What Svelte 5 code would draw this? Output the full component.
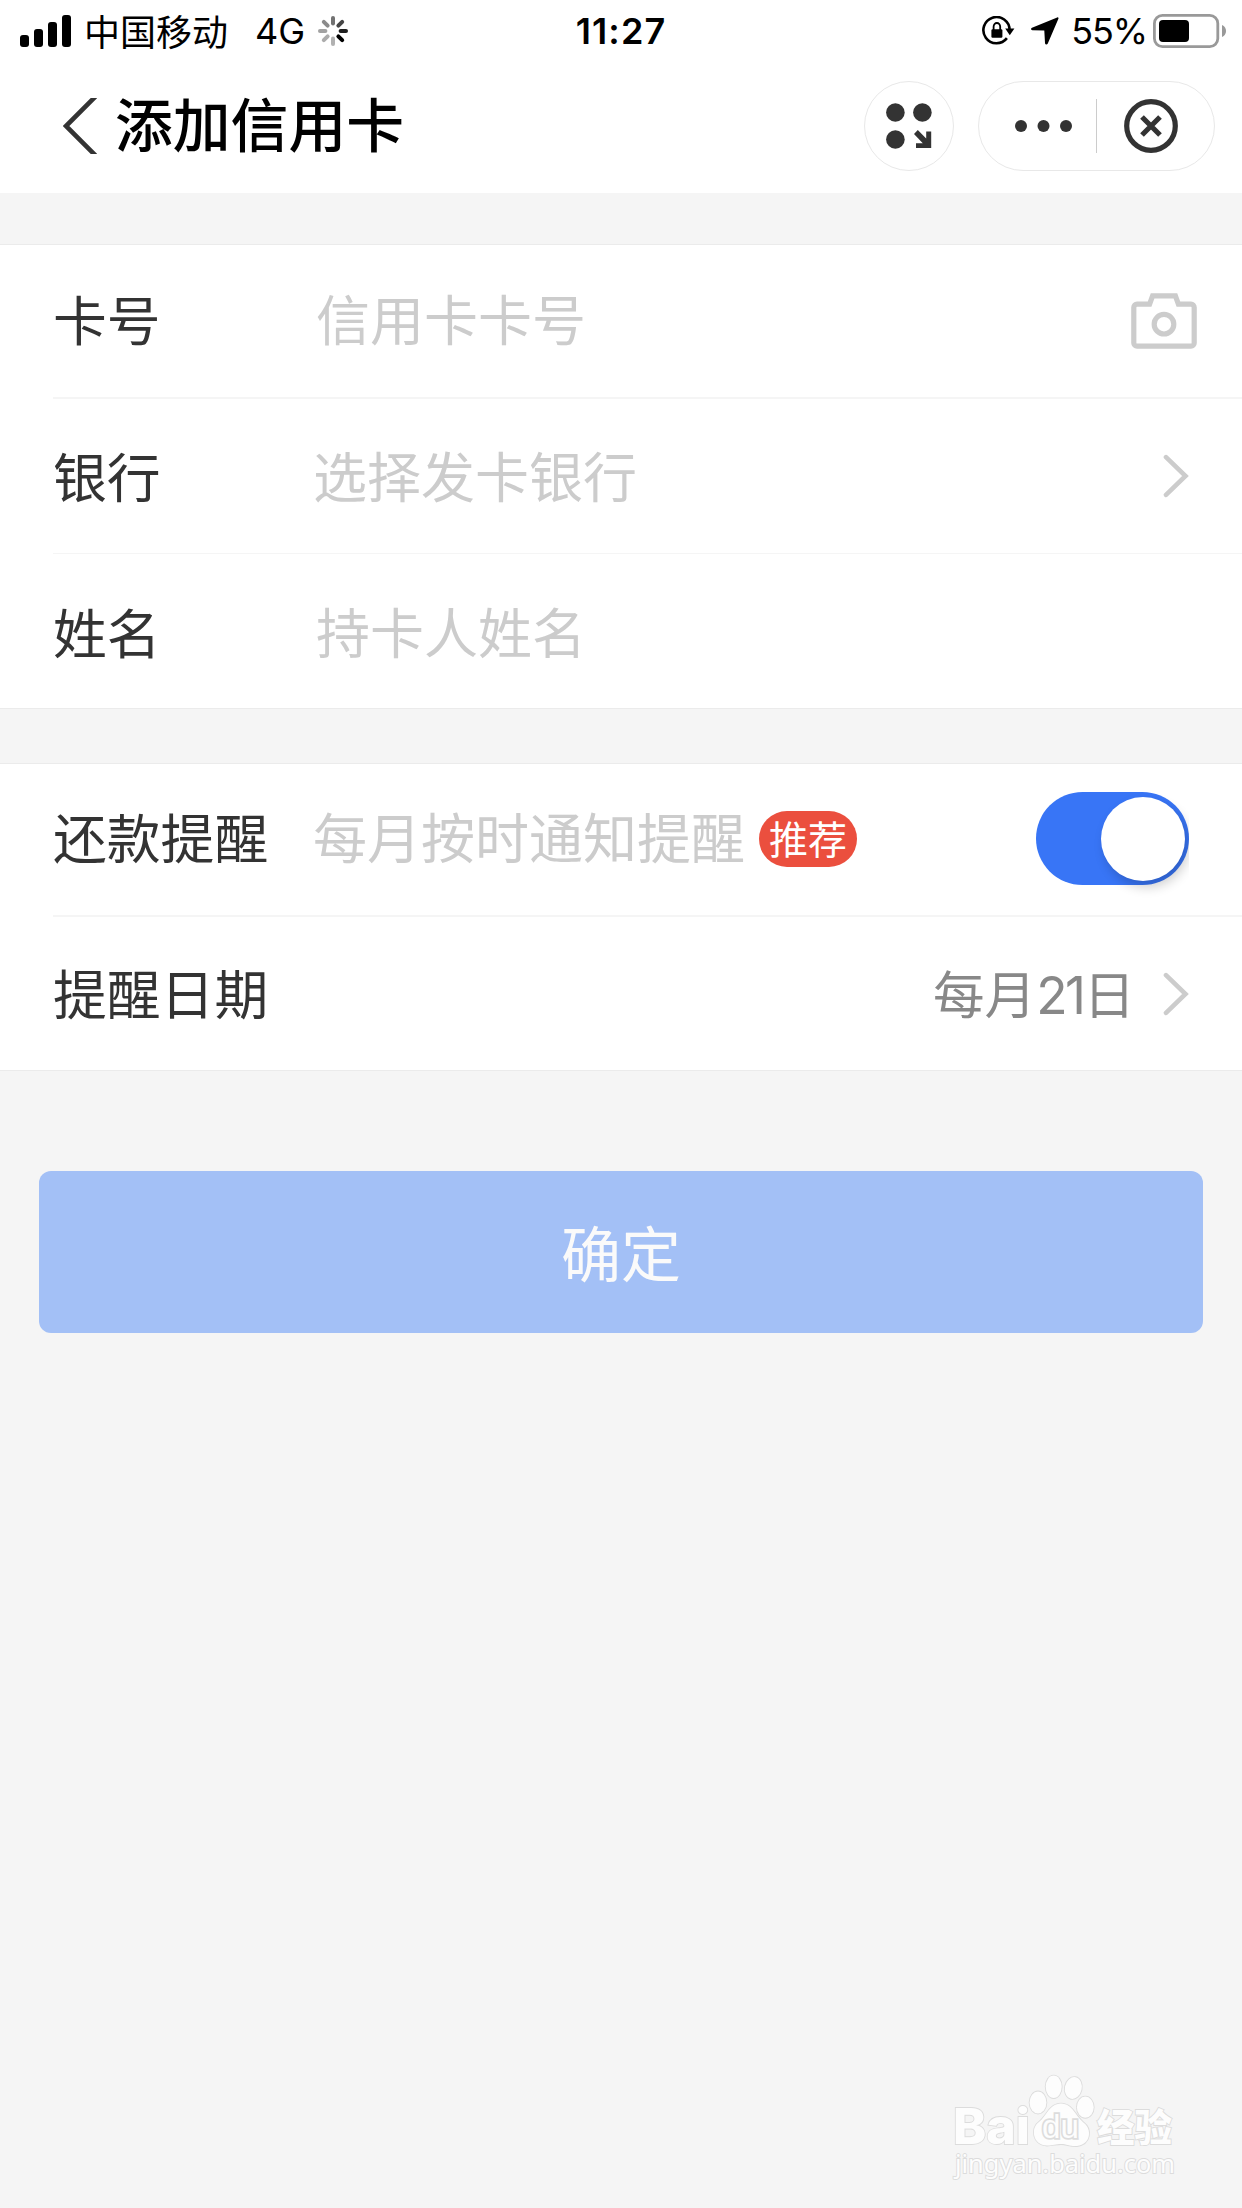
<script lang="ts">
	let reminderOn = $state(true);

	const bars = [12, 18, 25, 32];
	const spokes = [0.55, 0.72, 0.88, 1, 0.3, 0.32, 0.36, 0.45];
</script>

{#snippet chevron()}
	<svg class="chevron" width="26" height="44" viewBox="0 0 26 44">
		<path d="M3 3.2L22.5 22L3 40.8" />
	</svg>
{/snippet}

<div class="page">
	<div class="status">
		<div class="status-left">
			<div class="signal">
				{#each bars as height}
					<i style="height: {height}px"></i>
				{/each}
			</div>
			<span class="carrier">中国移动</span>
			<span class="network">4G</span>
			<svg class="spinner" width="30" height="30" viewBox="-15 -15 30 30">
				{#each spokes as opacity, i}
					<path d="M0 -7.6V-13" {opacity} transform="rotate({i * 45})" />
				{/each}
			</svg>
		</div>
		<span class="time">11:27</span>
		<div class="status-right">
			<svg class="lock" width="33" height="30" viewBox="0 0 33 30">
				<path class="ring" d="M24.9 22.1A13.1 13.1 0 1 1 27.6 14" />
				<path d="M23.2 12.6h9.2l-4.6 6.6z" />
				<rect x="9.4" y="13.2" width="11" height="8.6" rx="1.2" />
				<path class="shackle" d="M11.6 14v-3.2a3.3 3.8 0 0 1 6.6 0V14" />
			</svg>
			<svg class="location" width="28" height="28" viewBox="0 0 28 28">
				<path d="M26.2 0.4L1 10.7C-0.4 11.4 -0.2 13.3 1.4 13.3L13.3 13.6L14 26C14.2 27.8 16 28 16.8 26.4L27.4 1.8C27.8 0.7 27.1 0.1 26.2 0.4Z" />
			</svg>
			<span class="percent">55%</span>
			<svg class="battery" width="74" height="34" viewBox="0 0 74 34">
				<rect class="shell" x="1.4" y="1.4" width="63.4" height="31.2" rx="8" />
				<rect x="6" y="6" width="30" height="22" rx="4" />
				<path class="cap" d="M69 11c5.4 2 5.4 10 0 12z" />
			</svg>
		</div>
	</div>

	<header class="nav">
		<button class="back" aria-label="返回">
			<svg width="34" height="56" viewBox="0 0 34 56">
				<path d="M34 -3L3 28L34 59" />
			</svg>
		</button>
		<h1>添加信用卡</h1>
		<button class="apps" aria-label="小程序">
			<svg width="46" height="46" viewBox="0 0 46 46">
				<circle cx="9.4" cy="9.5" r="9.3" />
				<circle cx="36.4" cy="9.5" r="9.3" />
				<circle cx="9.4" cy="36.5" r="9.3" />
				<path d="M31.8 27L40.2 35.4V28.6H45.2V45H30V40.2H36.8L28 31Z" />
			</svg>
		</button>
		<div class="capsule">
			<button class="more" aria-label="更多">
				<svg width="58" height="12" viewBox="0 0 58 12">
					<circle cx="6" cy="6" r="6" />
					<circle cx="28.5" cy="6" r="6" />
					<circle cx="51" cy="6" r="6" />
				</svg>
			</button>
			<button class="close" aria-label="关闭">
				<svg width="54" height="54" viewBox="0 0 54 54">
					<circle cx="27" cy="27" r="24.3" />
					<path d="M18 18L36 36M36 18L18 36" />
				</svg>
			</button>
		</div>
	</header>

	<section class="group card-info">
		<div class="row">
			<span class="label">卡号</span>
			<span class="placeholder indent">信用卡卡号</span>
			<svg class="camera" width="66" height="56" viewBox="0 0 66 56">
				<path d="M6 11.2H18.6L21.6 2.8H44.4L47.4 11.2H60A3.2 3.2 0 0 1 63.2 14.4V50A3.2 3.2 0 0 1 60 53.2H6A3.2 3.2 0 0 1 2.8 50V14.4A3.2 3.2 0 0 1 6 11.2Z" />
				<circle cx="33" cy="31.2" r="9.8" />
			</svg>
		</div>
		<div class="row">
			<span class="label">银行</span>
			<span class="placeholder">选择发卡银行</span>
			{@render chevron()}
		</div>
		<div class="row">
			<span class="label">姓名</span>
			<span class="placeholder indent">持卡人姓名</span>
		</div>
	</section>

	<section class="group reminder">
		<div class="row">
			<span class="label">还款提醒</span>
			<span class="placeholder">每月按时通知提醒</span>
			<span class="badge">推荐</span>
			<button
				class="switch"
				class:switch-on={reminderOn}
				role="switch"
				aria-checked={reminderOn}
				aria-label="还款提醒"
				onclick={() => reminderOn = !reminderOn}
			>
				<span class="knob"></span>
			</button>
		</div>
		<div class="row">
			<span class="label">提醒日期</span>
			<span class="value">每月<span class="digits">21</span>日</span>
			{@render chevron()}
		</div>
	</section>

	<button class="submit">确定</button>

	<svg class="watermark" width="230" height="112" viewBox="0 0 230 112">
		<g class="mark">
			<text class="bai" x="5" y="69" textLength="77" lengthAdjust="spacingAndGlyphs">Bai</text>
			<ellipse cx="90" cy="27.5" rx="8.4" ry="11" />
			<ellipse cx="105.7" cy="11.8" rx="8" ry="11.2" />
			<ellipse cx="125.3" cy="13" rx="8.4" ry="11" transform="rotate(12 125.3 13)" />
			<ellipse cx="137.3" cy="32.2" rx="8.4" ry="10.6" />
			<path d="M113 28.6C101 29 99 41 91 47C82 53 85 70.5 99 70.5C105 70.5 108 69 113 69C119 69 122 71.5 129 71C143 69.5 144 54 136 48C127 41 125 29 113 28.6Z" />
			<text class="du" x="94" y="63" textLength="37" lengthAdjust="spacingAndGlyphs">du</text>
			<text class="exp" x="149" y="66" textLength="75" lengthAdjust="spacingAndGlyphs">经验</text>
			<text class="site" x="7" y="98" textLength="220" lengthAdjust="spacingAndGlyphs">jingyan.baidu.com</text>
		</g>
	</svg>
</div>

<style>
	:global(body) {
		background: #f5f5f5;
	}

	.page {
		display: flex;
		flex-direction: column;
		width: 1242px;
		height: 2208px;
		overflow: hidden;
		background: #f5f5f5;
		font-family: "Noto Sans CJK SC", sans-serif;
		color: #333;
	}

	button {
		margin: 0;
		padding: 0;
		border: 0;
		background: none;
		font: inherit;
		color: inherit;
	}

	svg {
		display: block;
		flex-shrink: 0;
	}

	.status {
		display: grid;
		grid-template-columns: 1fr auto 1fr;
		align-items: center;
		height: 62px;
		padding: 0 15px 0 20px;
		background: #fff;
		color: #000;
		font-size: 36px;
		line-height: 62px;
	}

	.status-left,
	.status-right {
		display: flex;
		align-items: center;
	}

	.status-right {
		justify-content: flex-end;
	}

	.signal {
		display: flex;
		align-items: flex-end;
		gap: 5px;
		height: 32px;
		margin-right: 13px;
	}

	.signal i {
		width: 9px;
		border-radius: 3px;
		background: #000;
	}

	.carrier {
		line-height: 60px;
		padding-bottom: 2px;
	}

	.network,
	.time,
	.percent {
		font-family: Inter, sans-serif;
	}

	.network {
		margin-left: 27px;
	}

	.time {
		margin-right: 5px;
		font-weight: 600;
		letter-spacing: 1.1px;
	}

	.percent {
		letter-spacing: -1.1px;
	}

	.spinner {
		margin-left: 13px;
		stroke: #000;
		stroke-width: 4;
		stroke-linecap: round;
	}

	.ring,
	.shackle {
		fill: none;
		stroke: #000;
		stroke-width: 2.6;
	}

	.shackle {
		stroke-width: 1.8;
	}

	.location {
		margin: 0 12px 0 16px;
	}

	.battery {
		margin-left: 6px;
	}

	.shell {
		fill: none;
		stroke: #999;
		stroke-width: 2.8;
	}

	.cap {
		fill: #999;
	}

	.nav {
		display: flex;
		align-items: center;
		height: 128px;
		padding: 0 27px 3px 63px;
		background: #fff;
	}

	.back path {
		fill: none;
		stroke: #333;
		stroke-width: 4.6;
	}

	h1 {
		flex: 1;
		margin: 0 0 0 18px;
		padding-bottom: 8px;
		font-size: 57.8px;
		font-weight: 500;
		line-height: 80px;
		color: #000;
	}

	.apps,
	.capsule {
		display: flex;
		align-items: center;
		box-sizing: border-box;
		height: 90px;
		border: 1px solid #e8e8e8;
		border-radius: 45px;
		fill: #333;
	}

	.apps {
		justify-content: center;
		width: 90px;
		margin-right: 24px;
	}

	.capsule {
		width: 237px;
	}

	.more {
		display: flex;
		justify-content: flex-end;
		align-items: center;
		width: 118px;
		height: 54px;
		padding-right: 23px;
		box-sizing: border-box;
		border-right: 1px solid #ccc;
	}

	.close {
		margin-left: 27px;
	}

	.close svg {
		fill: none;
		stroke: #333;
		stroke-width: 5.2;
	}

	.group {
		padding-left: 53px;
		border-top: 1px solid #ebebeb;
		border-bottom: 1px solid #ebebeb;
		background: #fff;
	}

	.card-info {
		margin-top: 51px;
	}

	.reminder {
		margin-top: 54px;
	}

	.row {
		display: flex;
		align-items: center;
		height: 152px;
		padding-right: 53px;
		font-size: 54px;
		line-height: 80px;
	}

	.row + .row {
		height: 154px;
		border-top: 2px solid #f5f5f5;
	}

	.card-info .row:last-child {
		border-top-width: 1px;
	}

	.reminder .row {
		height: 149px;
		padding-bottom: 2px;
	}

	.reminder .row + .row {
		height: 153px;
		padding-bottom: 0;
	}

	.label,
	.placeholder {
		padding-bottom: 6px;
	}

	.row + .row .label,
	.row + .row .placeholder {
		padding-bottom: 3px;
	}

	.card-info .row:last-child .label,
	.card-info .row:last-child .placeholder {
		padding-bottom: 1px;
	}

	.label {
		width: 260px;
		font-size: 53.8px;
	}

	.placeholder {
		color: #ccc;
	}

	.indent {
		margin-left: 3px;
	}

	.chevron,
	.camera {
		margin-left: auto;
		fill: none;
		stroke: #ccc;
		stroke-width: 5.2;
	}

	.chevron {
		stroke-width: 4.6;
		stroke-linecap: round;
	}

	.camera {
		margin-right: -8px;
	}

	.badge {
		height: 56px;
		margin-left: 14px;
		padding: 0 10px;
		border-radius: 28px;
		background: #eb4f3e;
		color: #fff;
		font-size: 39px;
		line-height: 52px;
	}

	.switch {
		display: flex;
		align-items: center;
		width: 153px;
		height: 93px;
		margin-left: auto;
		padding: 0 4px;
		box-sizing: border-box;
		border-radius: 47px;
		background: #ddd;
		/* knob shadow is cut off at the right edge of the track */
		clip-path: inset(0 0 -30px 0);
	}

	.switch-on {
		justify-content: flex-end;
		background: #3875f6;
	}

	.knob {
		width: 84px;
		height: 84px;
		border-radius: 50%;
		background: #fff;
		box-shadow: 4px 6px 12px rgba(0, 0, 0, 0.2);
	}

	.value {
		margin-left: auto;
		font-size: 51.5px;
		color: #888;
	}

	.value + .chevron {
		margin-left: 28px;
	}

	.digits {
		font-family: Inter, sans-serif;
		font-weight: 400;
		letter-spacing: -2.5px;
	}

	.submit {
		height: 162px;
		margin: 100px 39px 0;
		padding-bottom: 2px;
		border-radius: 12px;
		background: #a3c0f6;
		color: #fafafa;
		font-size: 60px;
		line-height: 150px;
	}

	.watermark {
		margin: auto 64px 21px auto;
		overflow: visible;
	}

	.mark {
		fill: #fdfdfd;
		stroke: #dcdcdc;
		stroke-width: 1.8;
		paint-order: stroke;
	}

	.bai {
		font: 800 49px Inter, sans-serif;
	}

	.du {
		font: 33px "Liberation Sans", sans-serif;
		stroke-width: 3.4;
	}

	.exp {
		font: 900 38px "Noto Sans CJK SC", sans-serif;
	}

	.site {
		font: 25px "Noto Sans", sans-serif;
	}
</style>
